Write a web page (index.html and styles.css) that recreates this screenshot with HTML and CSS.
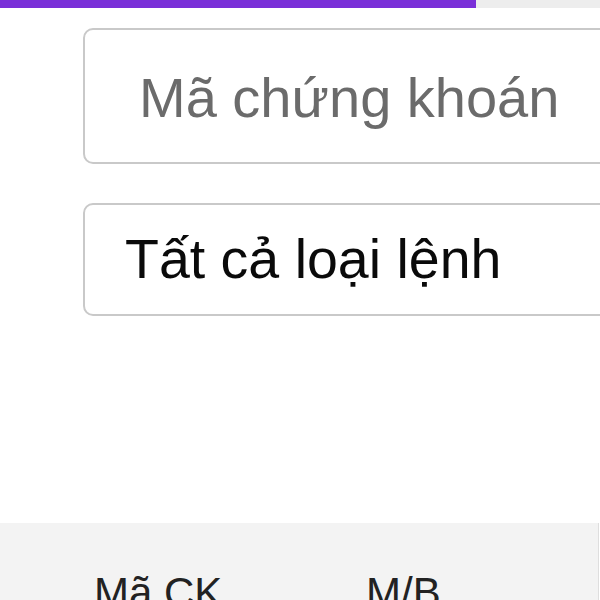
FILE: index.html
```html
<!DOCTYPE html>
<html lang="vi">
<head>
<meta charset="utf-8">
<title>Lệnh</title>
<link rel="stylesheet" href="styles.css">
</head>
<body>
<div class="progress"><div class="progress-fill" style="width: 476px"></div></div>
<div class="filters">
  <div class="field field-symbol"><span class="placeholder">Mã chứng khoán</span></div>
  <div class="field field-type"><span class="value">Tất cả loại lệnh</span></div>
</div>
<div class="table-head">
  <div class="col col-symbol">Mã CK</div>
  <div class="col col-side">M/B</div>
</div>
</body>
</html>
```
FILE: styles.css
```css
html, body {
  margin: 0;
  padding: 0;
  background: #ffffff;
  overflow: hidden;
  width: 600px;
  height: 600px;
  font-family: "Liberation Sans", Arial, sans-serif;
}

.progress {
  height: 8px;
  background: #ededed;
  display: flex;
}

.progress-fill {
  height: 8px;
  background: #7a2fd8;
}

.filters {
  padding: 20px 0 0 83px;
  display: flex;
  flex-direction: column;
  gap: 39px;
}

.field {
  box-sizing: border-box;
  width: 560px;
  border: 2px solid #c9c9c9;
  border-radius: 10px;
  display: flex;
  align-items: center;
  line-height: 1.15;
  white-space: nowrap;
}

.field-symbol {
  height: 136px;
  padding: 4px 0 0 54px;
  font-size: 56px;
}

.field-type {
  height: 113px;
  padding: 0 0 0 40px;
  font-size: 55.5px;
}

.placeholder {
  color: #6b6b6b;
}

.value {
  color: #0a0a0a;
}

.table-head {
  margin-top: 207px;
  box-sizing: border-box;
  width: 599px;
  height: 77px;
  background: #f3f3f3;
  border-right: 1px solid #dedede;
  display: flex;
  padding: 46px 0 0 94px;
  font-size: 42px;
  line-height: 1.15;
  color: #222222;
}

.col-symbol {
  width: 272px;
}
```
